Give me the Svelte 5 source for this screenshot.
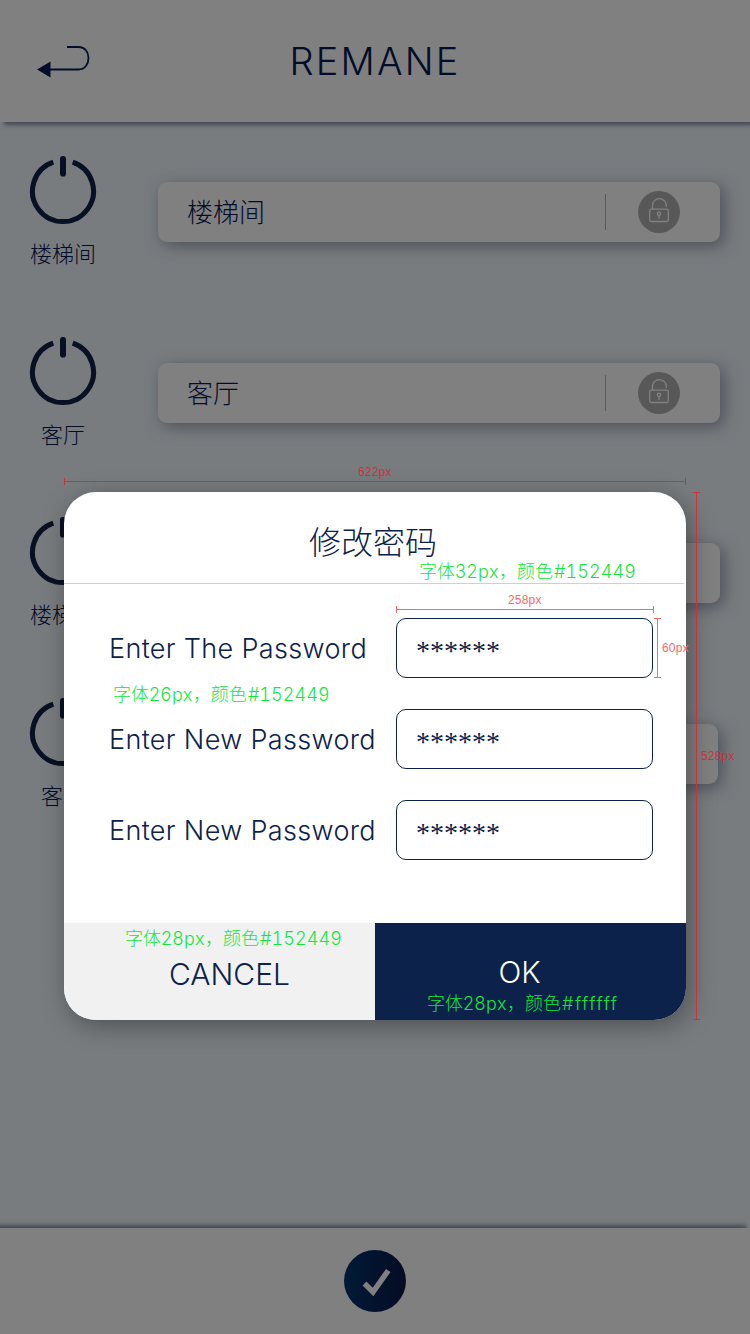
<script>
  const rooms = [
    { name: '楼梯间', value: '楼梯间' },
    { name: '客厅', value: '客厅' },
    { name: '楼梯间', value: '' },
    { name: '客厅', value: '' }
  ];
  const labels = ['Enter The Password', 'Enter New Password', 'Enter New Password'];
</script>

<div class="screen">
  <header class="top">
    <svg class="back" width="54" height="34" viewBox="0 0 54 34">
      <path d="M30 3H41.5C48 3 51.5 8 51.5 14S48 25.500 41.500 25.500H12" fill="none" stroke="#020d29" stroke-width="1.800" />
      <path d="M0 25.500L13.500 17.500V33.500Z" fill="#020d29" />
    </svg>
    <h1>REMANE</h1>
  </header>

  <main>
    {#each rooms as room, i}
      <section class="row">
        <div class="power">
          <svg width="68" height="70" viewBox="0 0 68 70">
            <path d="M24.300 7.200A30.500 30.500 0 1 0 43.700 7.200" fill="none" stroke="#081024" stroke-width="5" />
            <rect x="31" y="1" width="6" height="20.500" rx="2.800" fill="#081024" />
          </svg>
          <span>{room.name}</span>
        </div>
        <div class="field" class:short={i === 3}>
          <span class="name">{room.value}</span>
          <i class="sep"></i>
          <svg class="lock" width="42" height="42" viewBox="0 0 42 42">
            <circle cx="21" cy="21" r="21" fill="#585858" />
            <g fill="none" stroke="#808080" stroke-width="1.300">
              <rect x="11.700" y="18.200" width="18.600" height="12.300" rx="1.500" />
              <path d="M14.500 18V14.500a6.800 6.800 0 0 1 13.800 0V16" />
              <circle cx="21" cy="22.800" r="1.600" />
              <path d="M21 24.500V28" />
            </g>
          </svg>
        </div>
      </section>
    {/each}
  </main>

  <footer class="bottom">
    <svg width="62" height="62" viewBox="0 0 62 62">
      <defs>
        <linearGradient id="disc"><stop offset="0" stop-color="#001a35" /><stop offset="1" stop-color="#050c25" /></linearGradient>
      </defs>
      <circle cx="31" cy="31" r="31" fill="url(#disc)" />
      <path d="M20.500 33.500L29 42L44.300 20.500" fill="none" stroke="#808080" stroke-width="5.500" />
    </svg>
  </footer>

  <div class="dialog">
    <h2>修改密码</h2>
    <div class="form">
      {#each labels as label}
        <div class="line">
          <span class="label">{label}</span>
          <div class="input"><span>******</span></div>
        </div>
      {/each}
    </div>
    <div class="actions">
      <div class="btn cancel"><span>CANCEL</span></div>
      <div class="btn ok"><span>OK</span></div>
    </div>
  </div>

  <span class="note n1">字体<em>32px</em>，颜色<b>#152449</b></span>
  <span class="note n2">字体<em>26px</em>，颜色<b>#152449</b></span>
  <span class="note n3">字体<em>28px</em>，颜色<b>#152449</b></span>
  <span class="note n4">字体<em>28px</em>，颜色<b>#ffffff</b></span>

  <div class="rule h outer-w"></div>
  <div class="rule v outer-h"></div>
  <div class="rule h light inner-w"></div>
  <div class="rule v light inner-h"></div>
  <span class="size s1">622px</span>
  <span class="size s2">528px</span>
  <span class="size light s3">258px</span>
  <span class="size light s4">60px</span>
</div>

<style>
  :global(body) { margin: 0; }
  .screen {
    position: relative;
    width: 750px;
    height: 1334px;
    overflow: hidden;
    display: flex;
    flex-direction: column;
    background: #787c7f;
    color: #020d29;
    font-family: Inter, "Noto Sans CJK SC", sans-serif;
    font-weight: 300;
  }
  .screen * { box-sizing: border-box; }
  h1, h2 { margin: 0; font-weight: 300; }
  svg { display: block; flex: none; }
  .top {
    flex: none;
    height: 122px;
    display: grid;
    grid-template-columns: 90px 1fr 90px;
    align-items: center;
    background: #808080;
    box-shadow: 4px 3px 4px #434a56;
  }
  .back { margin-left: 37px; }
  h1 { text-align: center; font-size: 38px; line-height: 44px; letter-spacing: 2.200px; font-family: Inter, sans-serif; padding-bottom: 1px; }
  main {
    flex: 1;
    padding-top: 32px;
    display: flex;
    flex-direction: column;
  }
  .row {
    height: 180.670px;
    display: grid;
    grid-template-columns: 126px 562px;
    column-gap: 32px;
    align-items: start;
  }
  .power { display: flex; flex-direction: column; align-items: center; gap: 12px; font-size: 22px; padding-top: 1px; }
  .power span { line-height: 30px; font-family: "Noto Sans CJK SC", sans-serif; }
  .field {
    margin-top: 28px;
    height: 60px;
    border-radius: 9px;
    background: #808080;
    box-shadow: 4px 4px 16px #4b515c;
    display: flex;
    align-items: center;
    padding: 0 40px 0 29px;
  }
  .field.short { width: 560px; }
  .name { flex: 1; padding-bottom: 3px; font-size: 26px; font-family: "Noto Sans CJK SC", sans-serif; }
  .sep { width: 1px; height: 36px; background: #5b5b5b; margin-right: 32px; }
  .bottom {
    flex: none;
    height: 106px;
    display: flex;
    justify-content: center;
    align-items: center;
    background: #808080;
    box-shadow: -4px -3px 4px #434a56;
  }
  .dialog {
    position: absolute;
    left: 64px;
    top: 492px;
    width: 622px;
    height: 528px;
    border-radius: 32px;
    overflow: hidden;
    background: #fff;
    color: #0c224b;
    display: flex;
    flex-direction: column;
    box-shadow: 4px 6px 26px rgba(0, 0, 0, .35);
  }
  h2 {
    height: 92px;
    margin-right: 2px;
    padding-right: 2px;
    border-bottom: 1px solid #d0d0d0;
    text-align: center;
    font-size: 32px;
    line-height: 96px;
    font-family: "Noto Sans CJK SC", sans-serif;
  }
  .form {
    flex: 1;
    padding: 34px 33px 0 45px;
    display: flex;
    flex-direction: column;
    gap: 31px;
  }
  .line { display: flex; justify-content: space-between; align-items: center; }
  .label { font-size: 27px; letter-spacing: .35px; white-space: nowrap; line-height: 60px; padding-top: 1px; margin-bottom: -1px; }
  .input {
    width: 257px;
    height: 60px;
    border: 1px solid #0c224b;
    border-radius: 10px;
    padding-left: 19px;
    font: 400 28px/64px "Liberation Serif", serif;
  }
  .actions { height: 97px; display: grid; grid-template-columns: 1fr 1fr; }
  .btn { display: flex; justify-content: center; font-size: 30px; line-height: 102px; }
  .cancel { background: #f1f1f1; padding-left: 20px; }
  .ok { background: #0c224b; color: #fff; line-height: 98px; padding-right: 22px; }
  .note {
    position: absolute;
    color: #12e63c;
    font: 300 18px/26px Inter, "Noto Sans CJK SC", sans-serif;
    white-space: nowrap;
  }
  .note em { font-style: normal; letter-spacing: .500px; }
  .note b { font-weight: 300; font-variant-numeric: tabular-nums; letter-spacing: .100px; margin-left: 1px; }
  .n1 { left: 419px; top: 559px; }
  .n2 { left: 113px; top: 682px; }
  .n3 { left: 125px; top: 926px; }
  .n4 { left: 427px; top: 991px; }
  .n4 b { letter-spacing: 1.500px; }
  .rule, .size { position: absolute; --c: #c8343a; }
  .rule.light, .size.light { --c: #ff6668; }
  .rule.h { height: 7px; border: solid var(--c); border-width: 0 1px; background: linear-gradient(var(--c), var(--c)) 0 3px / 100% 1px no-repeat; }
  .rule.v { width: 7px; border: solid var(--c); border-width: 1px 0; background: linear-gradient(var(--c), var(--c)) 3px 0 / 1px 100% no-repeat; }
  .outer-w { left: 64px; top: 478px; width: 622px; }
  .outer-h { left: 693px; top: 492px; height: 528px; }
  .inner-w { left: 396px; top: 606px; width: 258px; }
  .inner-h { left: 654px; top: 618px; height: 60px; }
  .size { color: var(--c); font: 400 12px/14px "Liberation Sans", sans-serif; letter-spacing: .2px; }
  .s1 { left: 358px; top: 465px; }
  .s2 { left: 701px; top: 749px; }
  .s3 { left: 508px; top: 593px; }
  .s4 { left: 662px; top: 641px; }
</style>
